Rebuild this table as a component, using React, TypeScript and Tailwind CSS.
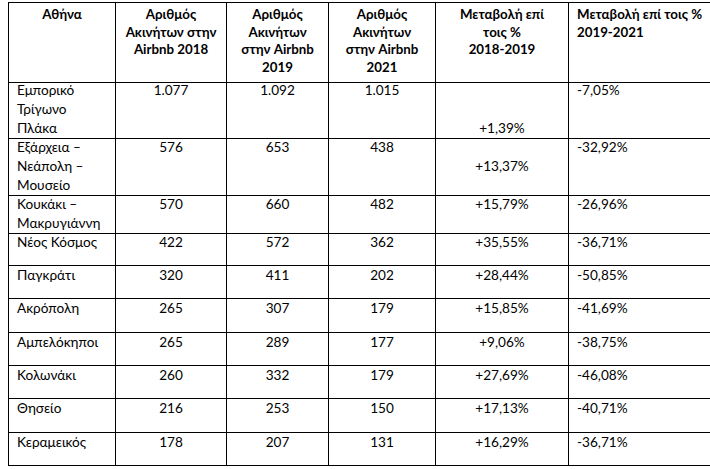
import React from 'react';

type Row = {
  area: string[];
  y2018: string;
  y2019: string;
  y2021: string;
  ch1819: string;
  ch1921: string;
  // which line of the cell the 2018-2019 change sits on (0 = first)
  chLine?: number;
  h: string;
  lift?: string;
};

const rows: Row[] = [
  { area: ['Εμπορικό', 'Τρίγωνο', 'Πλάκα'], y2018: '1.077', y2019: '1.092', y2021: '1.015', ch1819: '+1,39%', ch1921: '-7,05%', chLine: 2, h: 'h-[56px]', lift: '-mt-[2px]' },
  { area: ['Εξάρχεια –', 'Νεάπολη –', 'Μουσείο'], y2018: '576', y2019: '653', y2021: '438', ch1819: '+13,37%', ch1921: '-32,92%', chLine: 1, h: 'h-[56px]', lift: '-mt-[1px]' },
  { area: ['Κουκάκι –', 'Μακρυγιάννη'], y2018: '570', y2019: '660', y2021: '482', ch1819: '+15,79%', ch1921: '-26,96%', h: 'h-[38px]' },
  { area: ['Νέος Κόσμος'], y2018: '422', y2019: '572', y2021: '362', ch1819: '+35,55%', ch1921: '-36,71%', h: 'h-[33px]' },
  { area: ['Παγκράτι'], y2018: '320', y2019: '411', y2021: '202', ch1819: '+28,44%', ch1921: '-50,85%', h: 'h-[33px]' },
  { area: ['Ακρόπολη'], y2018: '265', y2019: '307', y2021: '179', ch1819: '+15,85%', ch1921: '-41,69%', h: 'h-[34px]' },
  { area: ['Αμπελόκηποι'], y2018: '265', y2019: '289', y2021: '177', ch1819: '+9,06%', ch1921: '-38,75%', h: 'h-[33px]' },
  { area: ['Κολωνάκι'], y2018: '260', y2019: '332', y2021: '179', ch1819: '+27,69%', ch1921: '-46,08%', h: 'h-[33px]' },
  { area: ['Θησείο'], y2018: '216', y2019: '253', y2021: '150', ch1819: '+17,13%', ch1921: '-40,71%', h: 'h-[34px]' },
  { area: ['Κεραμεικός'], y2018: '178', y2019: '207', y2021: '131', ch1819: '+16,29%', ch1921: '-36,71%', h: 'h-[33px]' },
];

const cols = 'grid grid-cols-[107px_111px_102px_107px_133px_160px]';
const cell = 'border-r border-b border-black';

function Lines({ lines }: { lines: string[] }) {
  return (
    <>
      {lines.map((l, i) => (
        <div key={i}>{l}</div>
      ))}
    </>
  );
}

export default function App() {
  return (
    <div className="w-[710px] h-[469px] overflow-hidden bg-white text-black font-['Lato','Liberation_Sans',sans-serif]">
      <div className="ml-[8px] mt-[2px] w-[720px] border-l border-t border-black">
        {/* header */}
        <div className={`${cols} h-[80px] text-[13.3px] leading-[17.5px] font-bold`}>
          <div className={`${cell} pt-[3px] text-center`}>Αθήνα</div>
          <div className={`${cell} pt-[3px] text-center`}>
            <Lines lines={['Αριθμός', 'Ακινήτων στην', 'Airbnb 2018']} />
          </div>
          <div className={`${cell} pt-[3px] text-center`}>
            <Lines lines={['Αριθμός', 'Ακινήτων', 'στην Airbnb', '2019']} />
          </div>
          <div className={`${cell} pt-[3px] text-center`}>
            <Lines lines={['Αριθμός', 'Ακινήτων', 'στην Airbnb', '2021']} />
          </div>
          <div className={`${cell} pt-[3px] text-center`}>
            <Lines lines={['Μεταβολή επί', 'τοις %', '2018-2019']} />
          </div>
          <div className={`${cell} pt-[3px] pl-2`}>
            <Lines lines={['Μεταβολή επί τοις %', '2019-2021']} />
          </div>
        </div>

        {rows.map((r) => (
          <div key={r.area.join()} className={`${cols} ${r.h} text-[13.6px] leading-[19px]`}>
            <div className={`${cell} pl-2`}>
              <div className={r.lift}>
                <Lines lines={r.area} />
              </div>
            </div>
            <div className={`${cell} text-center`}>
              <div className={r.lift}>{r.y2018}</div>
            </div>
            <div className={`${cell} text-center`}>
              <div className={r.lift}>{r.y2019}</div>
            </div>
            <div className={`${cell} text-center`}>
              <div className={r.lift}>{r.y2021}</div>
            </div>
            <div className={`${cell} text-center`}>
              <div className={r.lift} style={{ paddingTop: (r.chLine ?? 0) * 19 }}>{r.ch1819}</div>
            </div>
            <div className={`${cell} pl-2`}>
              <div className={r.lift}>{r.ch1921}</div>
            </div>
          </div>
        ))}
      </div>
    </div>
  );
}
